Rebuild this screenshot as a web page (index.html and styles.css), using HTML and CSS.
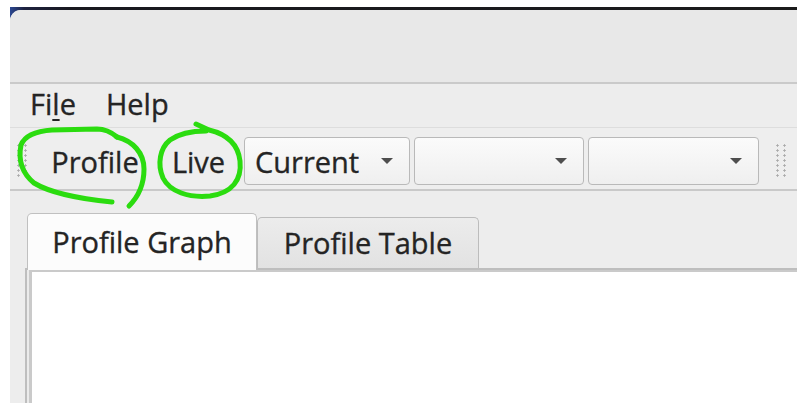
FILE: index.html
```html
<!DOCTYPE html>
<html lang="en">
<head>
<meta charset="utf-8">
<title>Profiler</title>
<link rel="stylesheet" href="styles.css">
</head>
<body>
<div class="desk">
  <div class="frame">
    <div class="window">
      <div class="titlebar"></div>
      <nav class="menubar">
        <span class="menu">Fi<u>l</u>e</span>
        <span class="menu">Help</span>
      </nav>
      <div class="toolbar">
        <span class="grip"></span>
        <button class="tool tool-profile">Profile</button>
        <button class="tool tool-live">Live</button>
        <div class="combo combo-mode"><span class="combo-text">Current</span><i class="arrow"></i></div>
        <div class="combo combo-b"><span class="combo-text"></span><i class="arrow"></i></div>
        <div class="combo combo-c"><span class="combo-text"></span><i class="arrow"></i></div>
        <span class="grip grip-end"></span>
      </div>
      <div class="tabs">
        <div class="tabbar">
          <div class="tab active">Profile Graph</div>
          <div class="tab">Profile Table</div>
        </div>
        <div class="pane">
          <div class="graph"></div>
        </div>
      </div>
    </div>
  </div>
  <!-- hand-drawn highlight loops around the two toolbar buttons -->
  <svg class="marks" viewBox="0 0 797 403" width="797" height="403">
    <path d="M117 137 C110 131 104 129 97 129 L52 130 C37 131 25 135 21 145 C18 160 22 173 34 183 C52 194 82 199 112 202"/>
    <path d="M117 137 C133 141 144 153 144 169 C144 186 138 197 129 206"/>
    <path d="M196 124 L209 130 C226 134 238 143 240 161 C242 180 232 193 210 196 C189 198 170 192 163 178 C157 164 160 148 170 140 C180 133 192 131 206 131"/>
  </svg>
</div>
</body>
</html>
```
FILE: styles.css
```css
html, body {
  margin: 0;
  height: 100%;
  overflow: hidden;
  background: #ffffff;
}

body {
  font-family: "Open Sans", "Noto Sans", "DejaVu Sans", sans-serif;
  color: #242424;
  -webkit-text-stroke: 0.35px currentColor;
}

.desk {
  position: relative;
  height: 403px;
  box-sizing: border-box;
  padding: 7px 0 0 10px;
}

/* the desktop peeking out above the window */
.frame {
  height: 100%;
  box-sizing: border-box;
  padding-top: 3px;
  background: linear-gradient(90deg, #2b4892 0, #1e2240 14px, #18181f 60px, #1b1b1b 100%);
}

.window {
  height: 100%;
  display: flex;
  flex-direction: column;
  background: #ededed;
  border-top-left-radius: 11px;
  overflow: hidden;
}

.titlebar {
  flex: none;
  height: 72px;
  background: #e8e8e8;
  border-bottom: 2px solid #cacaca;
}

.menubar {
  flex: none;
  display: flex;
  gap: 30px;
  height: 40px;
  padding: 0 0 3px 20px;
  line-height: 40px;
  font-size: 29px;
  background: #ededed;
}

.menu u {
  text-decoration-thickness: 2px;
  text-underline-offset: 4px;
}

.toolbar {
  flex: none;
  display: flex;
  align-items: flex-start;
  box-sizing: border-box;
  height: 64px;
  padding: 9px 0 0 5px;
  border-top: 1px solid #dddddd;
  border-bottom: 2px solid #c9c9c9;
  background: #eeeeee;
}

.grip {
  align-self: center;
  margin-top: -6px;
  width: 14px;
  height: 35px;
  background-image: radial-gradient(circle, #a9a9a9 0.9px, transparent 1.4px);
  background-size: 7px 5px;
}

.grip-end {
  margin-left: 15px;
}

.tool {
  height: 48px;
  padding: 0;
  border: 0;
  background: none;
  font: inherit;
  font-size: 29px;
  color: inherit;
  text-align: center;
}

.tool-profile {
  width: 122px;
  margin-left: 5px;
}

.tool-live {
  width: 85px;
}

.combo {
  display: flex;
  align-items: center;
  justify-content: space-between;
  box-sizing: border-box;
  height: 48px;
  padding: 0 16px 0 10px;
  border: 1px solid #b9b9b9;
  border-radius: 4px;
  background: linear-gradient(#fbfbfb, #efefef);
  font-size: 29px;
}

.combo-mode {
  width: 166px;
  margin-left: 3px;
}

.combo-b {
  width: 170px;
  margin-left: 4px;
}

.combo-c {
  width: 171px;
  margin-left: 4px;
}

.arrow {
  width: 0;
  height: 0;
  border-left: 6px solid transparent;
  border-right: 6px solid transparent;
  border-top: 6px solid #4e4e4e;
}

.tabs {
  flex: 1;
  display: flex;
  flex-direction: column;
  margin: 22px -10px 0 15px;
}

.tabbar {
  display: flex;
  align-items: flex-end;
  padding-left: 2px;
}

.tab {
  box-sizing: border-box;
  width: 222px;
  height: 51px;
  padding-top: 5px;
  border: 1px solid #bcbcbc;
  border-bottom: 0;
  border-radius: 5px 5px 0 0;
  background: linear-gradient(#ececec, #e2e2e2);
  font-size: 29px;
  line-height: 40px;
  text-align: center;
}

.tab.active {
  position: relative;
  z-index: 1;
  width: 230px;
  height: 57px;
  padding-top: 8px;
  margin-bottom: -2px;
  border-color: #c0c0c0;
  background: #fcfcfc;
}

.pane {
  flex: 1;
  display: flex;
  padding-left: 2px;
  border-top: 2px solid #bebebe;
  border-left: 2px solid #bebebe;
  background: #ebebeb;
}

.graph {
  flex: 1;
  background: #ffffff;
  border-top: 2px solid #cacaca;
  border-left: 3px solid #cacaca;
}

.marks {
  position: absolute;
  top: 0;
  left: 0;
  pointer-events: none;
}

.marks path {
  fill: none;
  stroke: #2bdc0f;
  stroke-width: 5;
  stroke-linecap: round;
  stroke-linejoin: round;
}
```
